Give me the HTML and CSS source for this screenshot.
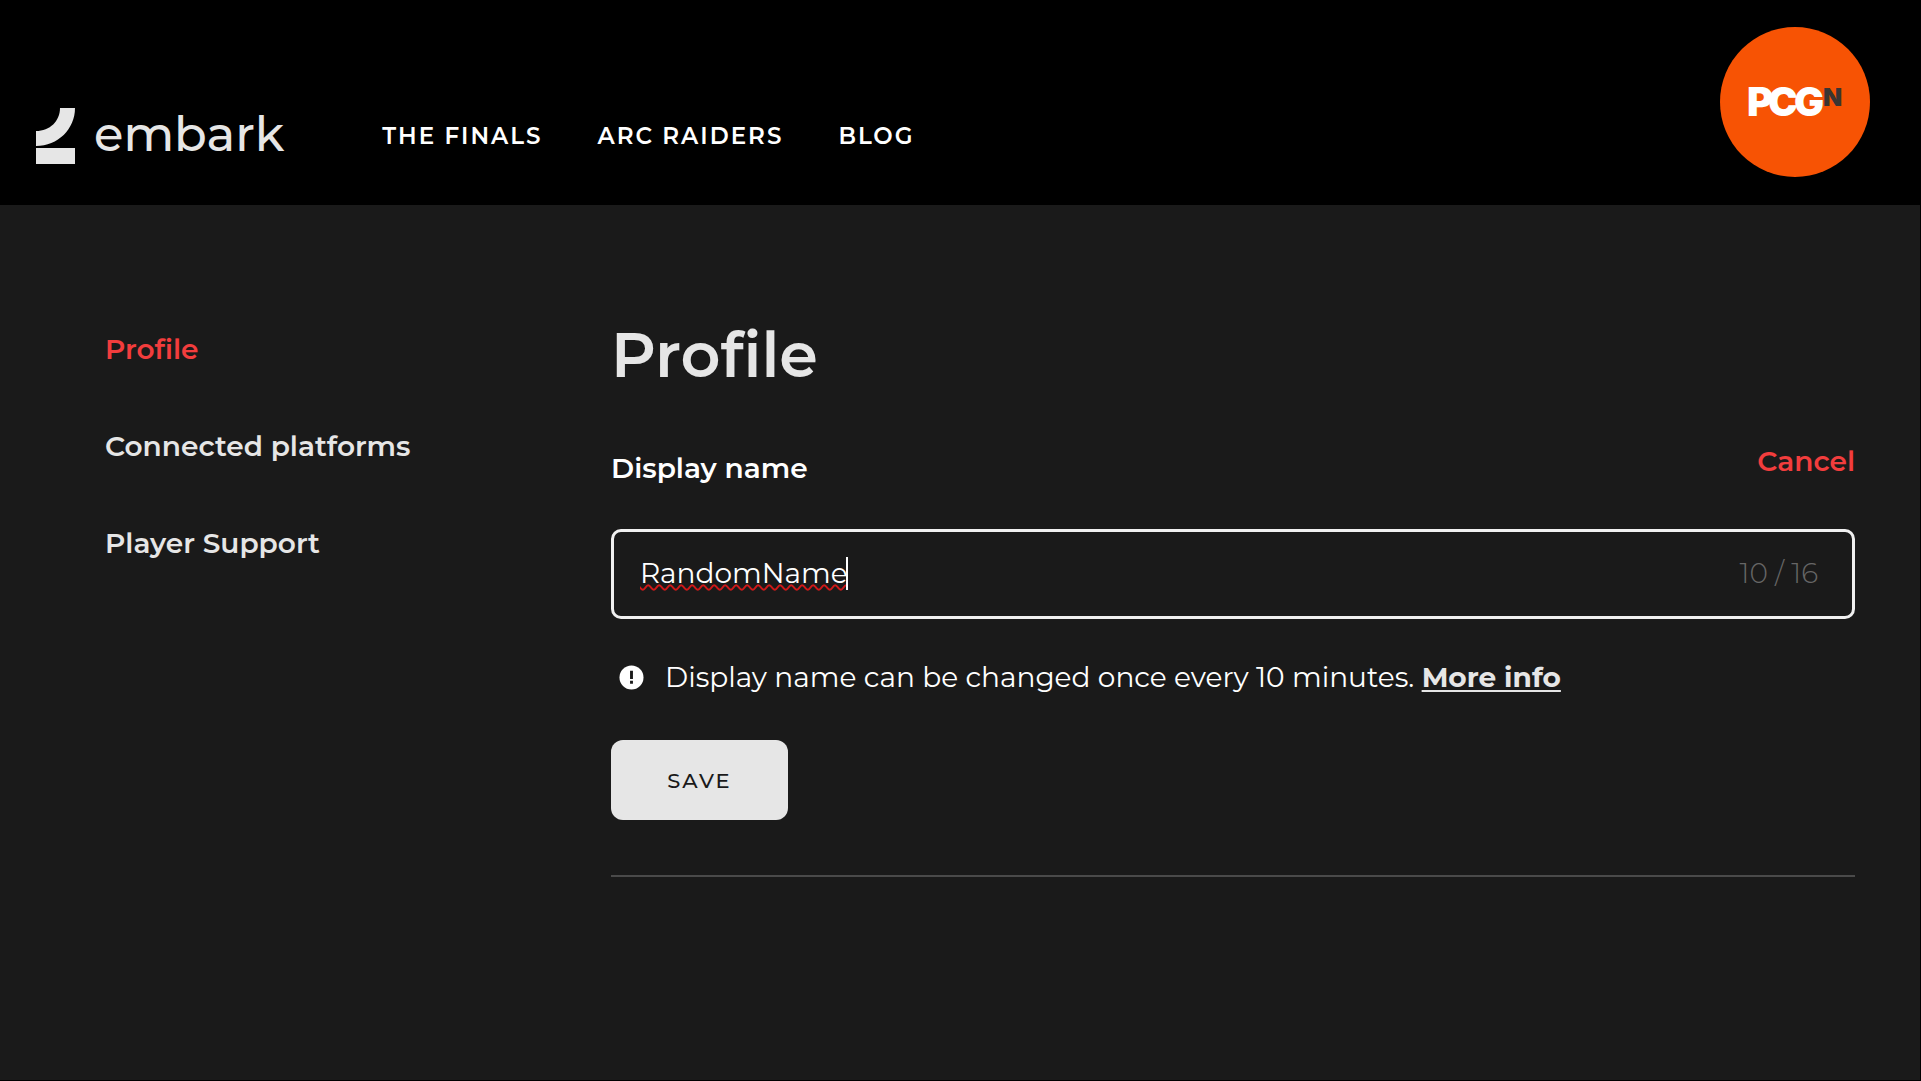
FILE: index.html
```html
<!DOCTYPE html>
<html lang="en">
<head>
    <meta charset="UTF-8">
    <meta name="viewport" content="width=device-width, initial-scale=1.0">
    <title>Profile - Embark</title>
    <link rel="stylesheet" href="styles.css">
</head>
<body>
    <header class="site-header">
        <a class="logo" href="#">
            <svg class="logo-mark" viewBox="0 0 39 56" aria-hidden="true">
                <path d="M24 0H39C39 21 22 38 0 38V23C14 23 24 13 24 0Z"/>
                <path d="M0 40H39V56H0Z"/>
            </svg>
            <span>embark</span>
        </a>
        <nav class="main-nav">
            <a href="#">THE FINALS</a>
            <a href="#">ARC RAIDERS</a>
            <a href="#">BLOG</a>
        </nav>
        <svg class="badge" viewBox="0 0 150 150">
            <circle cx="75" cy="75" r="75"/>
            <text class="badge-text" x="27 48 74" y="89">PCG</text>
            <text class="badge-n" x="103" y="79">N</text>
        </svg>
    </header>

    <div class="page">
        <nav class="side-nav">
            <a class="active" href="#">Profile</a>
            <a href="#">Connected platforms</a>
            <a href="#">Player Support</a>
        </nav>

        <main>
            <h1>Profile</h1>
            <form class="profile-form">
                <div class="form-head">
                    <label for="display-name">Display name</label>
                    <button class="cancel" type="button">Cancel</button>
                </div>
                <div class="field">
                    <input id="display-name" type="text" value="RandomName" maxlength="16">
                    <span class="caret"></span>
                    <span class="counter">10 / 16</span>
                </div>
                <div class="note">
                    <svg class="note-icon" viewBox="0 0 26 26" aria-hidden="true">
                        <circle cx="13" cy="13" r="12.5" fill="#fff"/>
                        <path d="M11.5 6h3v8.500h-3zM11.500 16.500h3v3h-3z" fill="#1a1a1a"/>
                    </svg>
                    <p>Display name can be changed once every 10 minutes. <a href="#">More info</a></p>
                </div>
                <button class="save" type="submit">SAVE</button>
            </form>
            <hr>
        </main>
    </div>
</body>
</html>
```

FILE: styles.css
```css
* {
    box-sizing: border-box;
}
body {
    display: flex;
    flex-direction: column;
    min-height: 100vh;
    margin: 0;
    background-color: #1a1a1a;
    border-right: 1px solid #000;
    border-bottom: 1px solid #000;
    color: #fff;
    font-family: Montserrat, Inter, sans-serif;
    font-size: 28px;
    line-height: 36px;
}
a {
    color: #e6e6e6;
    text-decoration: none;
}
.site-header {
    position: relative;
    display: flex;
    align-items: center;
    gap: 98px;
    padding: 104px 36px 37px;
    background-color: #000;
}
.logo {
    display: flex;
    align-items: center;
    gap: 19px;
    font-size: 48px;
    font-weight: 500;
    line-height: 64px;
}
.logo span {
    padding-bottom: 4px;
    line-height: 60px;
}
.logo-mark {
    width: 39px;
    height: 56px;
    fill: #e6e6e6;
}
.main-nav {
    display: flex;
    gap: 55px;
    font-size: 23px;
    font-weight: 600;
    letter-spacing: 2px;
}
.main-nav a {
    color: #fff;
}
/* partner badge over the header corner */
.badge {
    position: absolute;
    top: 27px;
    right: 50px;
    width: 150px;
    height: 150px;
    fill: #f75304;
}
.badge-text {
    fill: #fff;
    font-family: Inter, sans-serif;
    font-size: 40px;
    font-weight: 900;
}
.badge-n {
    fill: #3a3532;
    font-family: Inter, sans-serif;
    font-size: 25px;
    font-weight: 900;
}
.page {
    display: flex;
    gap: 64px;
    padding: 112px 65px 64px 105px;
}
.side-nav {
    display: flex;
    flex-direction: column;
    flex: 0 0 442px;
    gap: 61px;
    padding-top: 14px;
    font-weight: 600;
}
.side-nav .active {
    color: #f23d3d;
}
main {
    flex: 1;
}
h1 {
    margin: 0;
    color: #e6e6e6;
    font-size: 62px;
    font-weight: 600;
    line-height: 76px;
}
.form-head {
    display: flex;
    justify-content: space-between;
    align-items: flex-start;
    margin-top: 50px;
    font-weight: 600;
}
.form-head label {
    padding-top: 7px;
}
.cancel {
    padding: 0;
    border: none;
    background: none;
    color: #f23d3d;
    font: inherit;
}
.field {
    display: flex;
    align-items: center;
    height: 90px;
    margin-top: 43px;
    padding: 0 34px 2px 26px;
    border: 3px solid #f0f0f0;
    border-radius: 10px;
}
.field input {
    field-sizing: content;
    padding: 0;
    border: none;
    outline: none;
    background: none;
    color: #fff;
    font: inherit;
    text-decoration: underline wavy #d01818 2px;
}
.caret {
    width: 2px;
    height: 33px;
    margin-left: -2px;
    background-color: #fff;
}
.counter {
    margin-left: auto;
    color: #666;
    font-weight: 300;
}
.note {
    display: flex;
    align-items: center;
    gap: 21px;
    margin-top: 40px;
    padding-left: 8px;
}
.note-icon {
    width: 25px;
    height: 25px;
}
.note p {
    margin: 0;
}
.note a {
    font-weight: 700;
    text-decoration: underline 2px;
    text-underline-offset: 3px;
}
.save {
    width: 177px;
    height: 80px;
    margin-top: 45px;
    border: none;
    border-radius: 12px;
    background-color: #e6e6e6;
    color: #1a1a1a;
    font-family: inherit;
    font-size: 21px;
    font-weight: 500;
    letter-spacing: 2px;
}
hr {
    height: 2px;
    margin: 55px 0 0;
    border: none;
    background-color: #4a4a4a;
}
```
